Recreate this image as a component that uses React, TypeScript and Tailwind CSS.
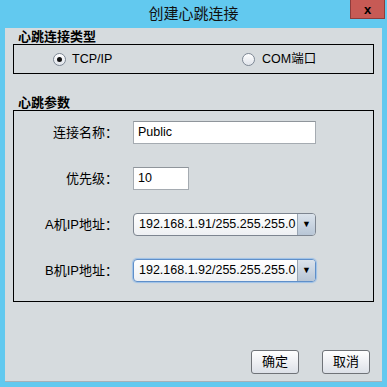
import React from "react";

const cjk = "font-['Liberation_Sans','Noto_Sans_CJK_SC',sans-serif]";

function Radio({ checked }: { checked: boolean }) {
  return (
    <span className="relative inline-flex h-[13px] w-[13px] items-center justify-center rounded-full border border-[#7d8794] bg-[linear-gradient(#ffffff,#dfe3ea)] shadow-[inset_0_0_1px_#ffffff]">
      {checked && <span className="h-[5px] w-[5px] rounded-full bg-[#111]" />}
    </span>
  );
}

function Combo({ value, focused }: { value: string; focused?: boolean }) {
  return (
    <div
      className={
        "flex h-[23px] w-[183px] items-stretch overflow-hidden rounded-[4px] border bg-[linear-gradient(#ffffff,#eef0f3)] " +
        (focused ? "border-[#5f8fc9] shadow-[0_0_1px_1px_#9cc0e8]" : "border-[#7d8590]")
      }
    >
      <div className="flex flex-1 items-center pl-[5px] text-[12.5px] text-black">{value}</div>
      <div className="flex w-[18px] items-center justify-center border-l border-[#9aa6b3] bg-[linear-gradient(#dbe3ec,#b8c6d6)] text-[9px] text-black">
        ▼
      </div>
    </div>
  );
}

function Field({ label, children }: { label: string; children: React.ReactNode }) {
  return (
    <div className="flex h-[23px] items-center">
      <div className="w-[104px] text-right text-[13px] text-black">{label}</div>
      <div className="ml-[15px]">{children}</div>
    </div>
  );
}

function Btn({ label }: { label: string }) {
  return (
    <button className="flex h-[24px] w-[48px] items-center justify-center rounded-[3px] border border-[#6f7378] bg-[linear-gradient(#ffffff,#dde1e8)] text-[13px] text-black">
      {label}
    </button>
  );
}

export default function App() {
  return (
    <div className={"flex h-[387px] w-[387px] flex-col bg-[#62c9ef] " + cjk}>
      <div className="relative flex h-[28px] items-center justify-center">
        <span className="text-[15px] text-[#111]">创建心跳连接</span>
        <div className="absolute right-[2px] top-0 flex h-[19px] w-[35px] items-center justify-center border border-t-0 border-[#8d3c3c] bg-[#c75a55] text-[13px] font-bold leading-none text-black">
          x
        </div>
      </div>
      <div className="mx-[5px] flex h-[354px] flex-col border-b border-[#a7b0b6] bg-[#d6dbde] px-[8px] pt-[2px]">
        <div className="h-[14px] pl-[5px] text-[13px] font-bold leading-[14px] text-black">心跳连接类型</div>
        <div className="flex h-[30px] items-center border border-black">
          <div className="flex w-[182px] items-center gap-[6px] pl-[39px] text-[12.5px] text-black">
            <Radio checked />
            <span>TCP/IP</span>
          </div>
          <div className="flex items-center gap-[7px] pl-[46px] text-[12.5px] text-black">
            <Radio checked={false} />
            <span>COM端口</span>
          </div>
        </div>
        <div className="mt-[22px] h-[14px] pl-[5px] text-[13px] font-bold leading-[14px] text-black">心跳参数</div>
        <div className="flex h-[192px] flex-col gap-[23px] border border-black pt-[10px]">
          <Field label="连接名称：">
            <div className="flex h-[23px] w-[183px] items-center border border-[#a5abb1] border-t-[#8f959b] bg-white pl-[4px] text-[12.5px] text-black">
              Public
            </div>
          </Field>
          <Field label="优先级：">
            <div className="flex h-[23px] w-[56px] items-center border border-[#a5abb1] border-t-[#8f959b] bg-white pl-[4px] text-[12.5px] text-black">
              10
            </div>
          </Field>
          <Field label="A机IP地址：">
            <Combo value="192.168.1.91/255.255.255.0" />
          </Field>
          <Field label="B机IP地址：">
            <Combo value="192.168.1.92/255.255.255.0" focused />
          </Field>
        </div>
        <div className="mt-auto mb-[7px] flex justify-end gap-[23px] pr-[4px]">
          <Btn label="确定" />
          <Btn label="取消" />
        </div>
      </div>
    </div>
  );
}
